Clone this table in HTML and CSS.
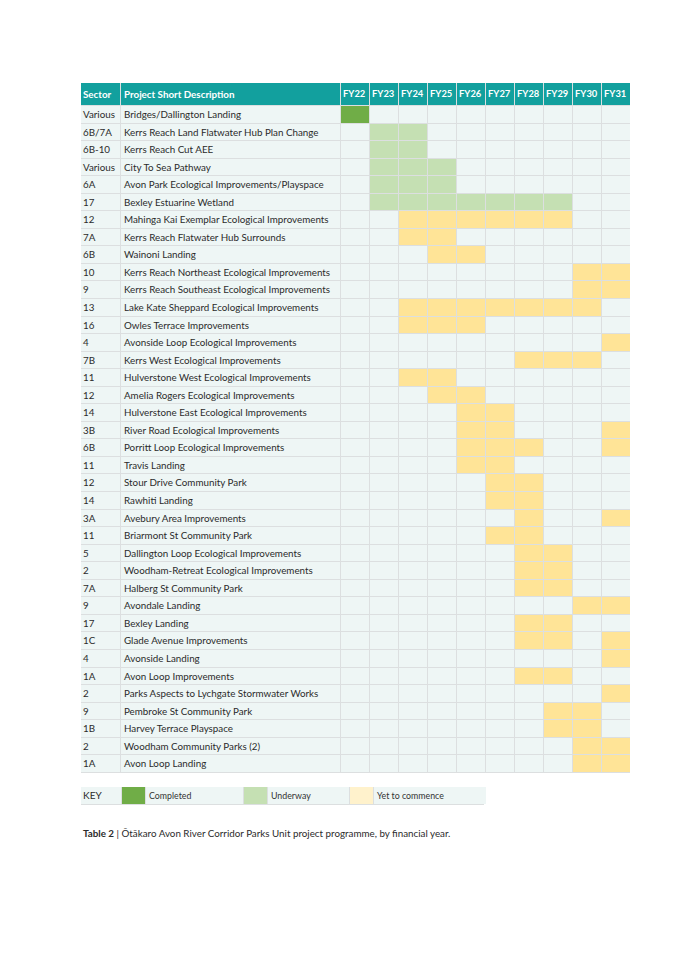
FILE: index.html
```html
<!DOCTYPE html>
<html lang="en">
<head>
<meta charset="utf-8">
<title>Table 2</title>
<link rel="stylesheet" href="styles.css">
</head>
<body>
<div class="page">
  <div class="tbl">
    <div class="row head"><div class="t">Sector</div><div class="t">Project Short Description</div><div class="f">FY22</div><div class="f">FY23</div><div class="f">FY24</div><div class="f">FY25</div><div class="f">FY26</div><div class="f">FY27</div><div class="f">FY28</div><div class="f">FY29</div><div class="f">FY30</div><div class="f">FY31</div></div>
    <div class="row"><div class="t">Various</div><div class="t">Bridges/Dallington Landing</div><b class="c"></b><b></b><b></b><b></b><b></b><b></b><b></b><b></b><b></b><b></b></div>
    <div class="row"><div class="t">6B/7A</div><div class="t">Kerrs Reach Land Flatwater Hub Plan Change</div><b></b><b class="u"></b><b class="u"></b><b></b><b></b><b></b><b></b><b></b><b></b><b></b></div>
    <div class="row"><div class="t">6B-10</div><div class="t">Kerrs Reach Cut AEE</div><b></b><b class="u"></b><b class="u"></b><b></b><b></b><b></b><b></b><b></b><b></b><b></b></div>
    <div class="row"><div class="t">Various</div><div class="t">City To Sea Pathway</div><b></b><b class="u"></b><b class="u"></b><b class="u"></b><b></b><b></b><b></b><b></b><b></b><b></b></div>
    <div class="row"><div class="t">6A</div><div class="t">Avon Park Ecological Improvements/Playspace</div><b></b><b class="u"></b><b class="u"></b><b class="u"></b><b></b><b></b><b></b><b></b><b></b><b></b></div>
    <div class="row"><div class="t">17</div><div class="t">Bexley Estuarine Wetland</div><b></b><b class="u"></b><b class="u"></b><b class="u"></b><b class="u"></b><b class="u"></b><b class="u"></b><b class="u"></b><b></b><b></b></div>
    <div class="row"><div class="t">12</div><div class="t">Mahinga Kai Exemplar Ecological Improvements</div><b></b><b></b><b class="y"></b><b class="y"></b><b class="y"></b><b class="y"></b><b class="y"></b><b class="y"></b><b></b><b></b></div>
    <div class="row"><div class="t">7A</div><div class="t">Kerrs Reach Flatwater Hub Surrounds</div><b></b><b></b><b class="y"></b><b class="y"></b><b></b><b></b><b></b><b></b><b></b><b></b></div>
    <div class="row"><div class="t">6B</div><div class="t">Wainoni Landing</div><b></b><b></b><b></b><b class="y"></b><b class="y"></b><b></b><b></b><b></b><b></b><b></b></div>
    <div class="row"><div class="t">10</div><div class="t">Kerrs Reach Northeast Ecological Improvements</div><b></b><b></b><b></b><b></b><b></b><b></b><b></b><b></b><b class="y"></b><b class="y"></b></div>
    <div class="row"><div class="t">9</div><div class="t">Kerrs Reach Southeast Ecological Improvements</div><b></b><b></b><b></b><b></b><b></b><b></b><b></b><b></b><b class="y"></b><b class="y"></b></div>
    <div class="row"><div class="t">13</div><div class="t">Lake Kate Sheppard Ecological Improvements</div><b></b><b></b><b class="y"></b><b class="y"></b><b class="y"></b><b class="y"></b><b class="y"></b><b class="y"></b><b class="y"></b><b></b></div>
    <div class="row"><div class="t">16</div><div class="t">Owles Terrace Improvements</div><b></b><b></b><b class="y"></b><b class="y"></b><b class="y"></b><b></b><b></b><b></b><b></b><b></b></div>
    <div class="row"><div class="t">4</div><div class="t">Avonside Loop Ecological Improvements</div><b></b><b></b><b></b><b></b><b></b><b></b><b></b><b></b><b></b><b class="y"></b></div>
    <div class="row"><div class="t">7B</div><div class="t">Kerrs West Ecological Improvements</div><b></b><b></b><b></b><b></b><b></b><b></b><b class="y"></b><b class="y"></b><b class="y"></b><b></b></div>
    <div class="row"><div class="t">11</div><div class="t">Hulverstone West Ecological Improvements</div><b></b><b></b><b class="y"></b><b class="y"></b><b></b><b></b><b></b><b></b><b></b><b></b></div>
    <div class="row"><div class="t">12</div><div class="t">Amelia Rogers Ecological Improvements</div><b></b><b></b><b></b><b class="y"></b><b class="y"></b><b></b><b></b><b></b><b></b><b></b></div>
    <div class="row"><div class="t">14</div><div class="t">Hulverstone East Ecological Improvements</div><b></b><b></b><b></b><b></b><b class="y"></b><b class="y"></b><b></b><b></b><b></b><b></b></div>
    <div class="row"><div class="t">3B</div><div class="t">River Road Ecological Improvements</div><b></b><b></b><b></b><b></b><b class="y"></b><b class="y"></b><b></b><b></b><b></b><b class="y"></b></div>
    <div class="row"><div class="t">6B</div><div class="t">Porritt Loop Ecological Improvements</div><b></b><b></b><b></b><b></b><b class="y"></b><b class="y"></b><b class="y"></b><b></b><b></b><b class="y"></b></div>
    <div class="row"><div class="t">11</div><div class="t">Travis Landing</div><b></b><b></b><b></b><b></b><b class="y"></b><b class="y"></b><b></b><b></b><b></b><b></b></div>
    <div class="row"><div class="t">12</div><div class="t">Stour Drive Community Park</div><b></b><b></b><b></b><b></b><b></b><b class="y"></b><b class="y"></b><b></b><b></b><b></b></div>
    <div class="row"><div class="t">14</div><div class="t">Rawhiti Landing</div><b></b><b></b><b></b><b></b><b></b><b class="y"></b><b class="y"></b><b></b><b></b><b></b></div>
    <div class="row"><div class="t">3A</div><div class="t">Avebury Area Improvements</div><b></b><b></b><b></b><b></b><b></b><b></b><b class="y"></b><b></b><b></b><b class="y"></b></div>
    <div class="row"><div class="t">11</div><div class="t">Briarmont St Community Park</div><b></b><b></b><b></b><b></b><b></b><b class="y"></b><b class="y"></b><b></b><b></b><b></b></div>
    <div class="row"><div class="t">5</div><div class="t">Dallington Loop Ecological Improvements</div><b></b><b></b><b></b><b></b><b></b><b></b><b class="y"></b><b class="y"></b><b></b><b></b></div>
    <div class="row"><div class="t">2</div><div class="t">Woodham-Retreat Ecological Improvements</div><b></b><b></b><b></b><b></b><b></b><b></b><b class="y"></b><b class="y"></b><b></b><b></b></div>
    <div class="row"><div class="t">7A</div><div class="t">Halberg St Community Park</div><b></b><b></b><b></b><b></b><b></b><b></b><b class="y"></b><b class="y"></b><b></b><b></b></div>
    <div class="row"><div class="t">9</div><div class="t">Avondale Landing</div><b></b><b></b><b></b><b></b><b></b><b></b><b></b><b></b><b class="y"></b><b class="y"></b></div>
    <div class="row"><div class="t">17</div><div class="t">Bexley Landing</div><b></b><b></b><b></b><b></b><b></b><b></b><b class="y"></b><b class="y"></b><b></b><b></b></div>
    <div class="row"><div class="t">1C</div><div class="t">Glade Avenue Improvements</div><b></b><b></b><b></b><b></b><b></b><b></b><b class="y"></b><b class="y"></b><b></b><b class="y"></b></div>
    <div class="row"><div class="t">4</div><div class="t">Avonside Landing</div><b></b><b></b><b></b><b></b><b></b><b></b><b></b><b></b><b></b><b class="y"></b></div>
    <div class="row"><div class="t">1A</div><div class="t">Avon Loop Improvements</div><b></b><b></b><b></b><b></b><b></b><b></b><b class="y"></b><b class="y"></b><b></b><b></b></div>
    <div class="row"><div class="t">2</div><div class="t">Parks Aspects to Lychgate Stormwater Works</div><b></b><b></b><b></b><b></b><b></b><b></b><b></b><b></b><b></b><b class="y"></b></div>
    <div class="row"><div class="t">9</div><div class="t">Pembroke St Community Park</div><b></b><b></b><b></b><b></b><b></b><b></b><b></b><b class="y"></b><b class="y"></b><b></b></div>
    <div class="row"><div class="t">1B</div><div class="t">Harvey Terrace Playspace</div><b></b><b></b><b></b><b></b><b></b><b></b><b></b><b class="y"></b><b class="y"></b><b></b></div>
    <div class="row"><div class="t">2</div><div class="t">Woodham Community Parks (2)</div><b></b><b></b><b></b><b></b><b></b><b></b><b></b><b></b><b class="y"></b><b class="y"></b></div>
    <div class="row"><div class="t">1A</div><div class="t">Avon Loop Landing</div><b></b><b></b><b></b><b></b><b></b><b></b><b></b><b></b><b class="y"></b><b class="y"></b></div>
  </div>

  <div class="key">
    <div class="kl">KEY</div><b class="c"></b><div class="kt k1">Completed</div><b class="u"></b><div class="kt k2">Underway</div><b class="yp"></b><div class="kt k3">Yet to commence</div>
  </div>

  <p class="caption"><strong>Table 2</strong> | Ōtākaro Avon River Corridor Parks Unit project programme, by financial year.</p>
</div>
</body>
</html>
```

FILE: styles.css
```css
html, body {
  margin: 0;
  padding: 0;
  background: #ffffff;
}

.page {
  padding: 83px 0 0 81px;
  font-family: "Lato", "Noto Sans", sans-serif;
  color: #2b2b2b;
}

.tbl {
  width: 549px;
  display: flex;
  flex-direction: column;
  gap: 1px;
  background: #dcdfe0;
  padding: 0 0 1px 0;
}

.row {
  display: grid;
  grid-template-columns: 39px 219px repeat(10, 28px);
  column-gap: 1px;
  height: 16.55px;
}

.row > * {
  background: #eef6f5;
  display: block;
}

.row .t {
  font-size: 9.8px;
  line-height: 17px;
  padding-left: 2px;
  white-space: nowrap;
  overflow: hidden;
}

.row .t + .t {
  padding-left: 3px;
}

.head {
  height: 22px;
}

.head > * {
  background: #12a09e;
  color: #ffffff;
  font-weight: 700;
}

.head .t {
  line-height: 22px;
}

.head .f {
  font-size: 9.4px;
  line-height: 22px;
  padding-left: 2px;
  white-space: nowrap;
}

.row b.c, .key b.c { background: #70ad47; }
.row b.u, .key b.u { background: #c5e0b3; }
.row b.y { background: #ffe497; }
.key b.yp { background: #fff2cc; }

.key {
  margin-top: 14px;
  width: 403px;
  display: grid;
  grid-template-columns: 40px 23px 97px 23px 81px 23px 112px;
  column-gap: 1px;
  height: 17px;
  background: #dcdfe0;
  padding: 0 0 1px 0;
}

.key > * {
  background: #eef6f5;
  display: block;
}

.key .kl {
  font-size: 10px;
  line-height: 17px;
  padding-left: 2px;
}

.key .kt {
  font-size: 8.8px;
  line-height: 17px;
  padding-left: 3px;
  color: #333;
}

.caption {
  margin: 22px 0 0 2px;
  font-size: 9.8px;
  color: #2b2b2b;
}

.caption strong {
  font-weight: 700;
}
```
